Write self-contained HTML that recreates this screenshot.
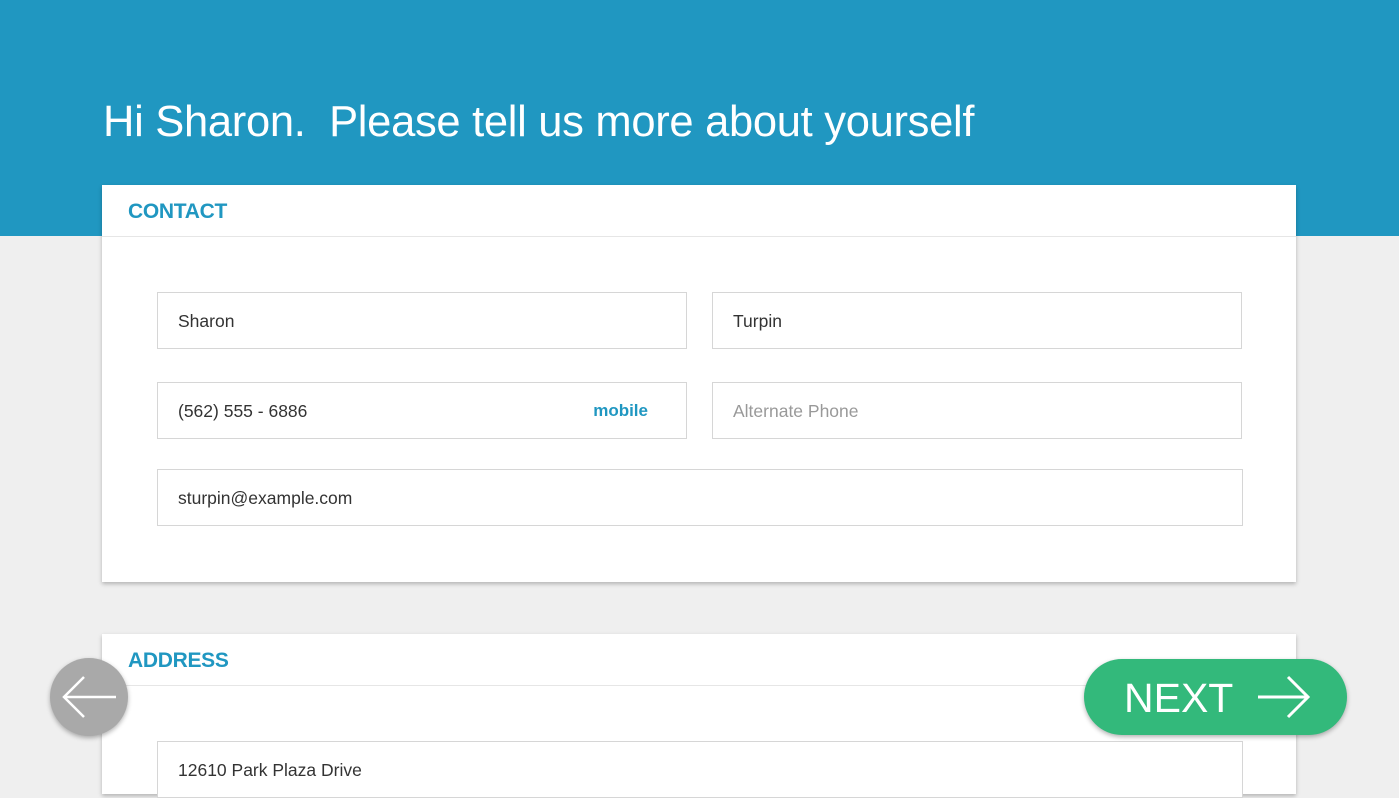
<!DOCTYPE html>
<html><head><style>
*{margin:0;padding:0;box-sizing:border-box}
body{width:1399px;height:787px;overflow:hidden;background:#efefef;font-family:"Liberation Sans",sans-serif;position:relative}
.hdr{position:absolute;left:0;top:0;width:1399px;height:236px;background:#2097c1}
.title{position:absolute;left:103px;top:98px;color:#fff;font-size:43.5px;font-weight:300;white-space:pre;letter-spacing:-0.3px}
.card{position:absolute;left:102px;width:1194px;background:#fff;box-shadow:0 2px 4px rgba(0,0,0,.25)}
.ch{height:52px;border-bottom:1px solid #e6e6e6;color:#2097c1;font-weight:bold;font-size:21px;padding:15px 0 0 26px;letter-spacing:-0.3px}
.in{position:absolute;border:1px solid #d6d6d6;height:57px;font-size:17.5px;color:#333;padding:18px 0 0 20px;background:#fff}
.ph{color:#999}
.mob{position:absolute;right:38px;top:18px;color:#2097c1;font-weight:bold;font-size:17px}
.back{position:absolute;left:50px;top:658px;width:78px;height:78px;border-radius:50%;background:#a9a9a9;box-shadow:0 2px 5px rgba(0,0,0,.3)}
.next{position:absolute;left:1084px;top:659px;width:263px;height:76px;border-radius:38px;background:#33b97b;box-shadow:0 2px 5px rgba(0,0,0,.3);color:#fff;font-size:41px;padding:16px 0 0 40px}
</style></head><body>
<div class="hdr"></div>
<div class="title">Hi Sharon.  Please tell us more about yourself</div>
<div class="card" style="top:185px;height:397px">
<div class="ch">CONTACT</div>
<div class="in" style="left:55px;top:107px;width:530px">Sharon</div>
<div class="in" style="left:610px;top:107px;width:530px">Turpin</div>
<div class="in" style="left:55px;top:197px;width:530px">(562) 555 - 6886<span class="mob">mobile</span></div>
<div class="in ph" style="left:610px;top:197px;width:530px">Alternate Phone</div>
<div class="in" style="left:55px;top:284px;width:1086px">sturpin@example.com</div>
</div>
<div class="card" style="top:634px;height:160px">
<div class="ch">ADDRESS</div>
<div class="in" style="left:55px;top:107px;width:1086px">12610 Park Plaza Drive</div>
</div>
<div class="back"><svg width="78" height="78" viewBox="0 0 78 78"><path d="M14 39H66M34 19L14 39L34 59" stroke="#fff" stroke-width="2.5" fill="none"/></svg></div>
<div class="next">NEXT<svg style="position:absolute;left:172px;top:14px" width="56" height="48" viewBox="0 0 56 48"><path d="M2 24H52M32 4L52 24L32 44" stroke="#fff" stroke-width="3" fill="none"/></svg></div>
</body></html>
